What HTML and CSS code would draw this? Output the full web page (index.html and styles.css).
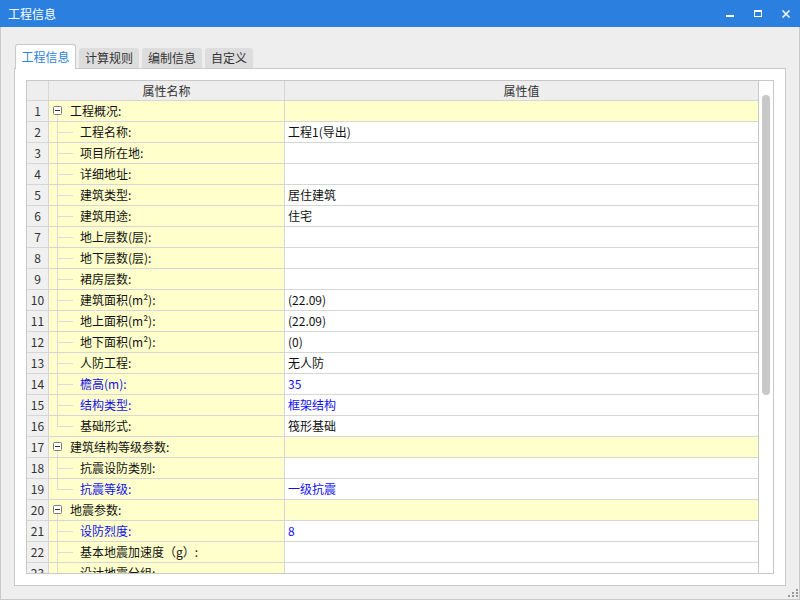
FILE: index.html
```html
<!DOCTYPE html>
<html lang="zh-CN">
<head>
<meta charset="utf-8">
<title>工程信息</title>
<link rel="stylesheet" href="styles.css">
</head>
<body>
<div class="app">
  <div class="titlebar">
    <span class="title">工程信息</span>
    <div class="winbtns">
      <span class="winbtn"><svg width="28" height="27" viewBox="0 0 28 27"><rect x="10" y="15" width="8" height="2" fill="#fff"/></svg></span>
      <span class="winbtn"><svg width="28" height="27" viewBox="0 0 28 27"><rect x="10" y="10" width="8" height="2" fill="#fff"/><rect x="10" y="10" width="1" height="7" fill="#fff"/><rect x="17" y="10" width="1" height="7" fill="#fff"/><rect x="10" y="16" width="8" height="1" fill="#fff"/></svg></span>
      <span class="winbtn"><svg width="28" height="27" viewBox="0 0 28 27"><path d="M10.5 10.5L17.5 17.5M17.5 10.5L10.5 17.5" stroke="#fff" stroke-width="1.6"/></svg></span>
    </div>
  </div>
  <div class="winbody">
    <div class="tabs">
      <div class="tab active">工程信息</div>
      <div class="tab w60">计算规则</div>
      <div class="tab w60">编制信息</div>
      <div class="tab w48">自定义</div>
    </div>
    <div class="panel">
      <div class="grid">
        <div class="gridmain">
          <div class="row head"><div class="num"></div><div class="name">属性名称</div><div class="val">属性值</div></div>
          <div class="row group"><div class="num">1</div><div class="name"><span class="tree top"><svg width="9" height="9" viewBox="0 0 9 9"><rect x="0.5" y="0.5" width="8" height="8" rx="1" fill="#fff" stroke="#7c7c7c"/><path d="M2 4.5h5" stroke="#333"/></svg></span>工程概况:</div><div class="val"></div></div>
          <div class="row"><div class="num">2</div><div class="name"><span class="tree mid"></span>工程名称:</div><div class="val">工程1(导出)</div></div>
          <div class="row"><div class="num">3</div><div class="name"><span class="tree mid"></span>项目所在地:</div><div class="val"></div></div>
          <div class="row"><div class="num">4</div><div class="name"><span class="tree mid"></span>详细地址:</div><div class="val"></div></div>
          <div class="row"><div class="num">5</div><div class="name"><span class="tree mid"></span>建筑类型:</div><div class="val">居住建筑</div></div>
          <div class="row"><div class="num">6</div><div class="name"><span class="tree mid"></span>建筑用途:</div><div class="val">住宅</div></div>
          <div class="row"><div class="num">7</div><div class="name"><span class="tree mid"></span>地上层数(层):</div><div class="val"></div></div>
          <div class="row"><div class="num">8</div><div class="name"><span class="tree mid"></span>地下层数(层):</div><div class="val"></div></div>
          <div class="row"><div class="num">9</div><div class="name"><span class="tree mid"></span>裙房层数:</div><div class="val"></div></div>
          <div class="row"><div class="num">10</div><div class="name"><span class="tree mid"></span>建筑面积(m²):</div><div class="val">(22.09)</div></div>
          <div class="row"><div class="num">11</div><div class="name"><span class="tree mid"></span>地上面积(m²):</div><div class="val">(22.09)</div></div>
          <div class="row"><div class="num">12</div><div class="name"><span class="tree mid"></span>地下面积(m²):</div><div class="val">(0)</div></div>
          <div class="row"><div class="num">13</div><div class="name"><span class="tree mid"></span>人防工程:</div><div class="val">无人防</div></div>
          <div class="row blue"><div class="num">14</div><div class="name"><span class="tree mid"></span>檐高(m):</div><div class="val">35</div></div>
          <div class="row blue"><div class="num">15</div><div class="name"><span class="tree mid"></span>结构类型:</div><div class="val">框架结构</div></div>
          <div class="row"><div class="num">16</div><div class="name"><span class="tree last"></span>基础形式:</div><div class="val">筏形基础</div></div>
          <div class="row group"><div class="num">17</div><div class="name"><span class="tree top"><svg width="9" height="9" viewBox="0 0 9 9"><rect x="0.5" y="0.5" width="8" height="8" rx="1" fill="#fff" stroke="#7c7c7c"/><path d="M2 4.5h5" stroke="#333"/></svg></span>建筑结构等级参数:</div><div class="val"></div></div>
          <div class="row"><div class="num">18</div><div class="name"><span class="tree mid"></span>抗震设防类别:</div><div class="val"></div></div>
          <div class="row blue"><div class="num">19</div><div class="name"><span class="tree last"></span>抗震等级:</div><div class="val">一级抗震</div></div>
          <div class="row group"><div class="num">20</div><div class="name"><span class="tree top"><svg width="9" height="9" viewBox="0 0 9 9"><rect x="0.5" y="0.5" width="8" height="8" rx="1" fill="#fff" stroke="#7c7c7c"/><path d="M2 4.5h5" stroke="#333"/></svg></span>地震参数:</div><div class="val"></div></div>
          <div class="row blue"><div class="num">21</div><div class="name"><span class="tree mid"></span>设防烈度:</div><div class="val">8</div></div>
          <div class="row"><div class="num">22</div><div class="name"><span class="tree mid"></span>基本地震加速度（g）:</div><div class="val"></div></div>
          <div class="row"><div class="num">23</div><div class="name"><span class="tree mid"></span>设计地震分组:</div><div class="val"></div></div>
        </div>
        <div class="vscroll"><div class="thumb"></div></div>
      </div>
    </div>
    <div class="footer">
      <svg class="grip" width="11" height="10" viewBox="0 0 11 10"><rect x="8" y="1" width="2" height="2" fill="#9a9a9a"/><rect x="4" y="4" width="2" height="2" fill="#9a9a9a"/><rect x="8" y="4" width="2" height="2" fill="#9a9a9a"/><rect x="0" y="7" width="2" height="2" fill="#9a9a9a"/><rect x="4" y="7" width="2" height="2" fill="#9a9a9a"/><rect x="8" y="7" width="2" height="2" fill="#9a9a9a"/></svg>
    </div>
  </div>
</div>
</body>
</html>
```
FILE: styles.css
```css
* { box-sizing: border-box; }
html, body { margin: 0; padding: 0; }
body {
  width: 800px;
  height: 600px;
  overflow: hidden;
  font-family: "Noto Sans CJK SC", "Noto Sans", sans-serif;
  font-size: 12px;
  color: #111;
  background: #eeeeee;
}
.app { width: 800px; height: 600px; display: flex; flex-direction: column; }
.titlebar {
  height: 27px;
  flex: none;
  background: #2b7fde;
  display: flex;
  align-items: center;
  padding-left: 8px;
  color: #fff;
}
.title { font-size: 12px; line-height: 27px; flex: 1; }
.winbtns { display: flex; height: 27px; }
.winbtn { width: 28px; height: 27px; display: block; }
.winbtn svg { display: block; }

.winbody {
  flex: 1;
  background: #eeeeee;
  border: 1px solid #c9c9c9;
  border-top: none;
  padding: 17px 13px 0 13px;
  display: flex;
  flex-direction: column;
}
.tabs {
  height: 24px;
  display: flex;
  align-items: flex-end;
  gap: 3px;
  padding-left: 1px;
  position: relative;
  z-index: 1;
}
.tab {
  height: 20px;
  line-height: 20px;
  text-align: center;
  background: #dddddd;
  color: #333;
  border-radius: 3px 3px 0 0;
}
.tab.w60 { width: 60px; }
.tab.w48 { width: 48px; }
.tab.active {
  width: 61px;
  height: 25px;
  line-height: 23px;
  margin-bottom: -1px;
  background: #fff;
  color: #2b7fde;
  border: 1px solid #c8c8c8;
  border-bottom: none;
}
.panel {
  height: 518px;
  flex: none;
  background: #fff;
  border: 1px solid #c8c8c8;
  padding: 11px 11px 11px 11px;
}
.grid {
  height: 494px;
  border: 1px solid #c8c8c8;
  display: flex;
  overflow: hidden;
}
.gridmain { flex: 1; overflow: hidden; }
.row {
  display: grid;
  grid-template-columns: 22px 236px 1fr;
  height: 21px;
  border-bottom: 1px solid #d6d6d6;
}
.row > div { height: 20px; line-height: 20px; white-space: nowrap; overflow: hidden; }
.num {
  background: #f0f0f0;
  border-right: 1px solid #d6d6d6;
  text-align: center;
  color: #333;
}
.name {
  background: #ffffcc;
  border-right: 1px solid #d6d6d6;
  display: flex;
  align-items: flex-start;
}
.val { padding-left: 3px; background: #fff; }
.row.group .val { background: #ffffcc; }
.row.head { height: 20px; }
.row.head > div { height: 19px; line-height: 19px; background: #eeeeee; color: #333; display: block; text-align: center; padding: 0; }
.row.blue .name, .row.blue .val { color: #1010f0; }

.tree { display: block; flex: none; width: 31px; height: 20px; }
.tree.top {
  width: 21px;
  padding: 5px 0 0 4px;
  background: linear-gradient(#dcdcdc, #dcdcdc) 8px 14px / 1px 6px no-repeat;
}
.tree.top svg { display: block; }
.tree.mid {
  background:
    linear-gradient(#dcdcdc, #dcdcdc) 8px 0 / 1px 21px no-repeat,
    linear-gradient(#dcdcdc, #dcdcdc) 8px 10px / 16px 1px no-repeat;
}
.tree.last {
  background:
    linear-gradient(#dcdcdc, #dcdcdc) 8px 0 / 1px 11px no-repeat,
    linear-gradient(#dcdcdc, #dcdcdc) 8px 10px / 16px 1px no-repeat;
}

.vscroll {
  width: 15px;
  flex: none;
  border-left: 1px solid #c8c8c8;
  background: #fff;
  padding: 14px 0 0 3px;
}
.thumb {
  width: 8px;
  height: 300px;
  border-radius: 4px;
  background: #c8c8c8;
}
.footer {
  height: 13px;
  flex: none;
  display: flex;
  justify-content: flex-end;
  align-items: flex-start;
  padding-top: 2px;
  margin-right: -13px;
}
.grip { display: block; }
```
